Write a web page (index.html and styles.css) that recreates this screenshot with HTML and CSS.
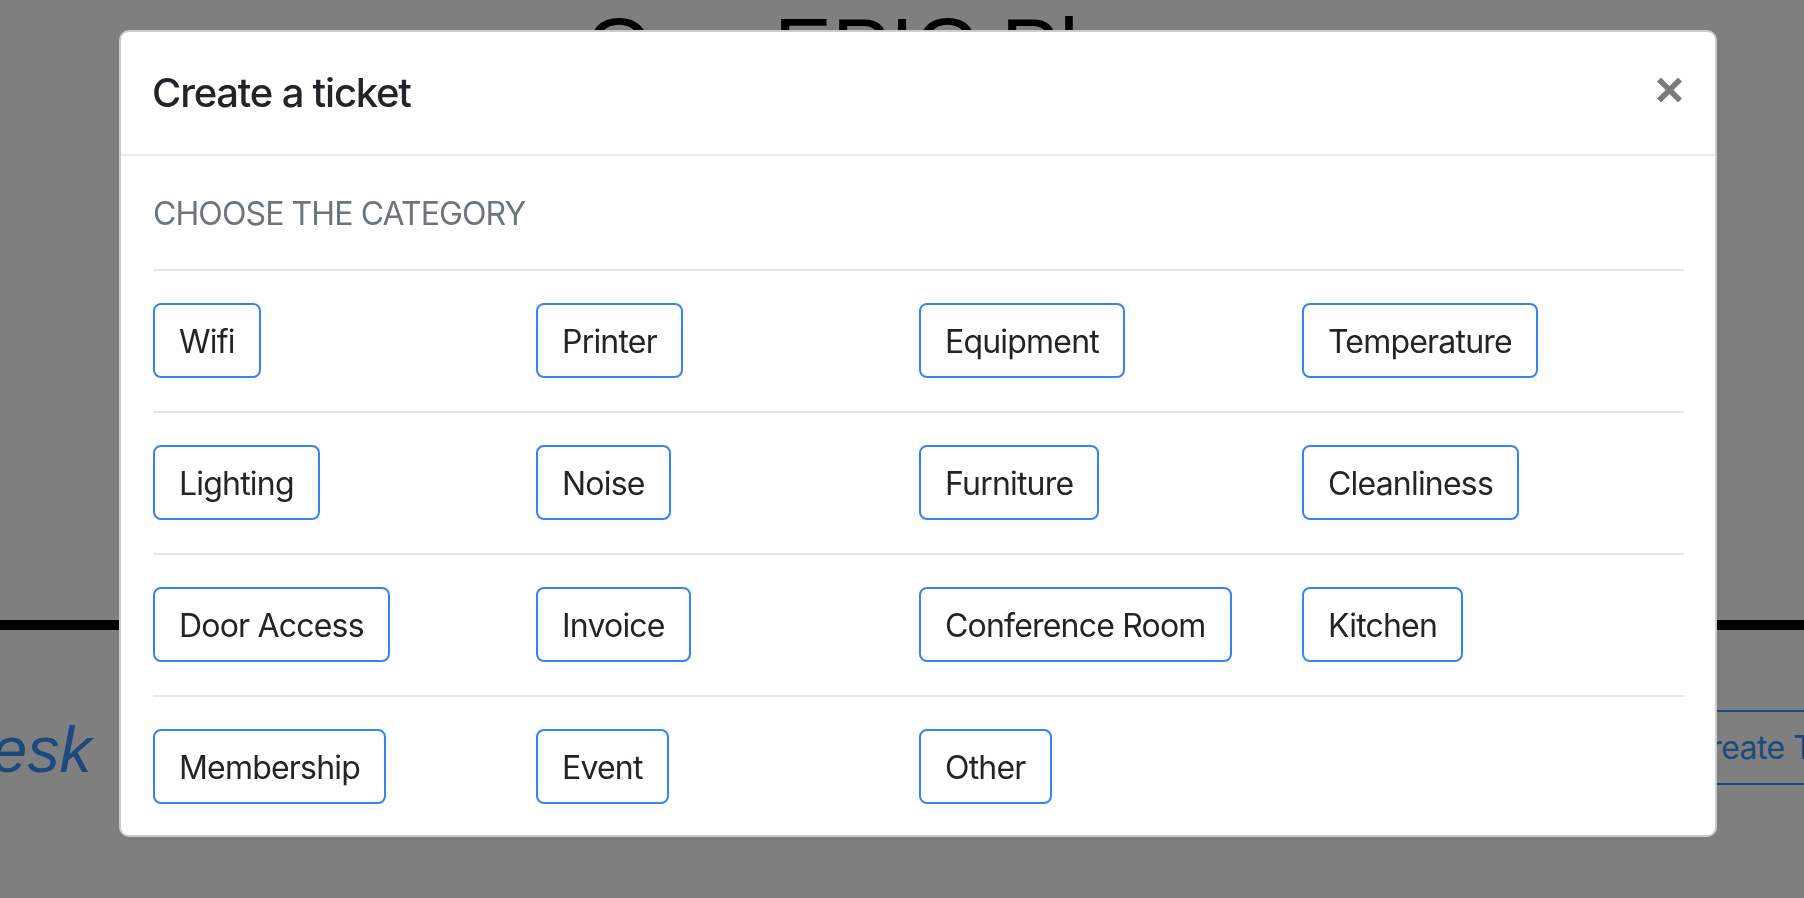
FILE: index.html
```html
<!DOCTYPE html>
<html lang="en">
<head>
<meta charset="utf-8">
<title>Create a ticket</title>
<link rel="stylesheet" href="styles.css">
</head>
<body>
<div class="page">
  <header class="hero">
    <h1 class="hero-title">One EPIC Place</h1>
  </header>
  <nav class="topbar">
    <span class="brand">HelpDesk</span>
    <a class="create-btn" href="#">Create Ticket</a>
  </nav>
</div>
<div class="backdrop"></div>
<div class="modal" role="dialog">
  <div class="modal-header">
    <h5 class="modal-title">Create a ticket</h5>
    <button class="close" type="button" aria-label="Close">
      <svg width="25" height="24" viewBox="0 0 25 24"><path d="M2 1.5 L23 22.5 M23 1.5 L2 22.5" stroke="#7a7a7a" stroke-width="5.5" fill="none"/></svg>
    </button>
  </div>
  <div class="modal-body">
    <h6 class="section-title">Choose the category</h6>
    <div class="cat-row">
      <button class="cat-btn">Wifi</button>
      <button class="cat-btn">Printer</button>
      <button class="cat-btn">Equipment</button>
      <button class="cat-btn">Temperature</button>
    </div>
    <div class="cat-row">
      <button class="cat-btn">Lighting</button>
      <button class="cat-btn">Noise</button>
      <button class="cat-btn">Furniture</button>
      <button class="cat-btn">Cleanliness</button>
    </div>
    <div class="cat-row">
      <button class="cat-btn">Door Access</button>
      <button class="cat-btn">Invoice</button>
      <button class="cat-btn">Conference Room</button>
      <button class="cat-btn">Kitchen</button>
    </div>
    <div class="cat-row last">
      <button class="cat-btn">Membership</button>
      <button class="cat-btn">Event</button>
      <button class="cat-btn">Other</button>
    </div>
  </div>
</div>
</body>
</html>
```
FILE: styles.css
```css
html, body {
  margin: 0;
  padding: 0;
  height: 100%;
  overflow: hidden;
  background: #ffffff;
}

.page {
  font-family: "Liberation Sans", Arial, sans-serif;
}

.hero {
  height: 620px;
  border-bottom: 10px solid #000;
  text-align: center;
}

.hero-title {
  margin: 0;
  padding-top: 5px;
  font-size: 87px;
  line-height: 1;
  font-weight: 400;
  color: #000;
}

.topbar {
  display: flex;
  align-items: flex-start;
  justify-content: space-between;
  padding-top: 80px;
  margin-left: -186px;
  margin-right: -104px;
}

.brand {
  margin-top: 8px;
  font-size: 64px;
  line-height: 1;
  font-style: italic;
  color: rgb(56, 148, 255);
}

.create-btn {
  display: block;
  height: 75px;
  box-sizing: border-box;
  padding: 0 24px;
  border: 2px solid rgb(56, 148, 255);
  border-radius: 8px;
  font-family: Inter, "Liberation Sans", sans-serif;
  font-size: 32px;
  letter-spacing: -0.6px;
  line-height: 71px;
  color: rgb(56, 148, 255);
  text-decoration: none;
}

.backdrop {
  position: fixed;
  inset: 0;
  background: rgba(0, 0, 0, 0.5);
}

.modal {
  position: fixed;
  top: 30px;
  left: 119px;
  width: 1598px;
  box-sizing: border-box;
  background: #fff;
  border: 2px solid rgba(0, 0, 0, 0.2);
  border-radius: 10px;
  font-family: Inter, "Liberation Sans", sans-serif;
  color: #212529;
}

.modal-header {
  display: flex;
  align-items: center;
  justify-content: space-between;
  height: 122px;
  padding: 0 33px 0 31px;
  border-bottom: 2px solid #e9ecef;
}

.modal-title {
  margin: 0;
  font-size: 40px;
  line-height: 48px;
  font-weight: 500;
  letter-spacing: -1.2px;
  color: #212529;
}

.close {
  display: flex;
  padding: 0;
  margin: 0;
  border: 0;
  background: transparent;
  margin-top: -6px;
}

.modal-body {
  padding: 39px 31px 31px 32px;
}

.section-title {
  margin: 0 0 36px 0;
  font-size: 32px;
  line-height: 38px;
  font-weight: 400;
  letter-spacing: -0.9px;
  text-transform: uppercase;
  color: #6c757d;
}

.cat-row {
  display: grid;
  grid-template-columns: 383px 383px 383px 1fr;
  padding: 32px 0 33px 0;
  border-top: 2px solid #e6e6e6;
}

.cat-row.last {
  padding-bottom: 0;
}

.cat-btn {
  justify-self: start;
  height: 75px;
  box-sizing: border-box;
  padding: 2px 24px 0 24px;
  border: 2px solid #3584f0;
  border-radius: 8px;
  background: #fff;
  font-family: Inter, "Liberation Sans", sans-serif;
  font-size: 32px;
  line-height: 69px;
  letter-spacing: -0.8px;
  font-weight: 400;
  color: #212529;
  cursor: pointer;
}
```
